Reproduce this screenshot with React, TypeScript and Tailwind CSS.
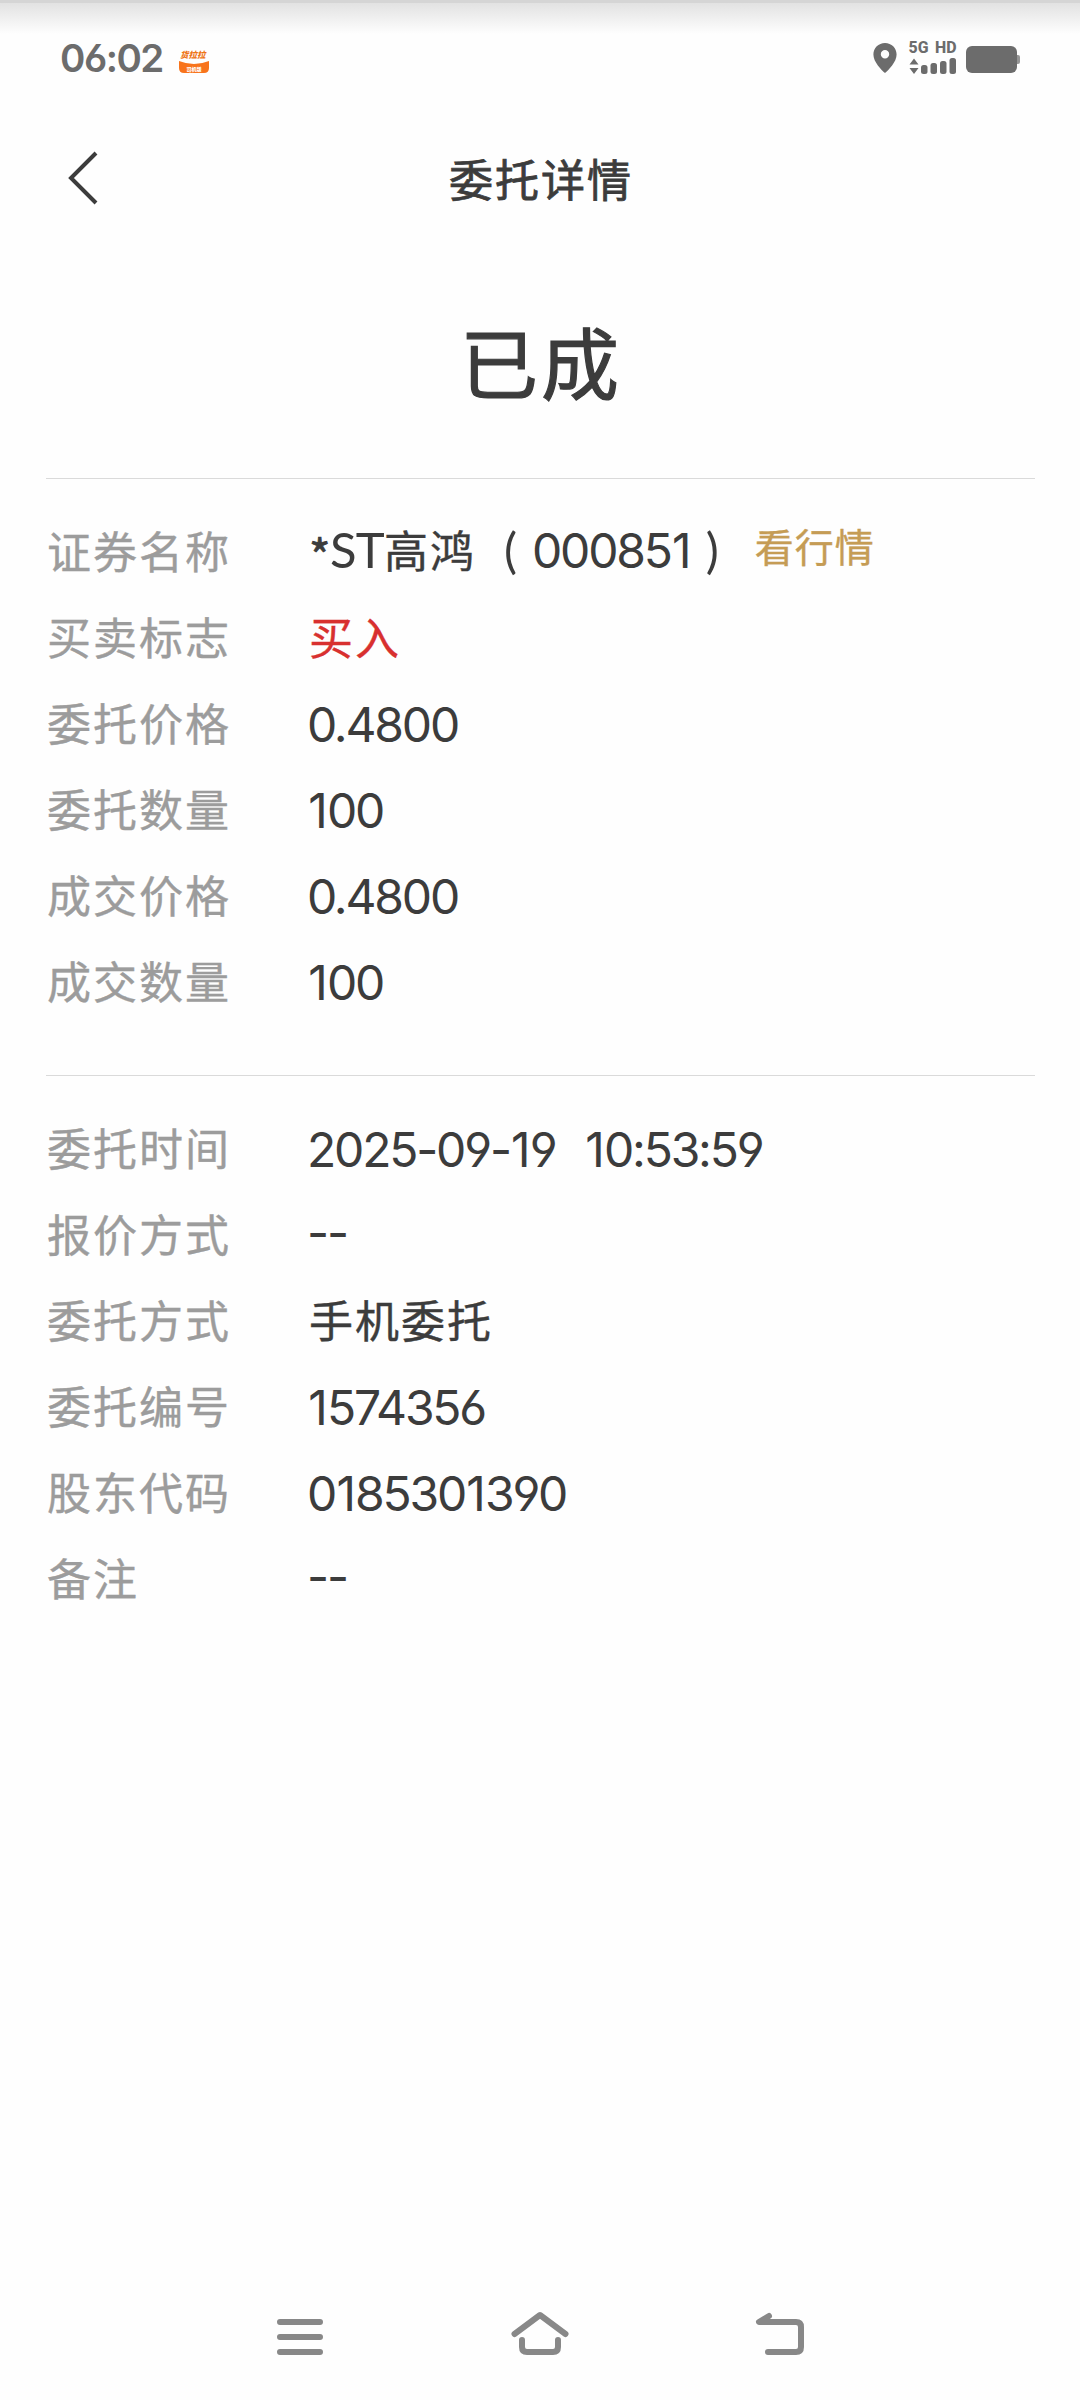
import { ReactNode } from "react";

type Row = {
    label: string;
    value: ReactNode;
    link?: string;
};

// the digit 1 is narrow, so it gets a little room on both sides
const Num = ({ children }: { children: string }) => (
    <span className="-ml-0.5 whitespace-pre font-['Inter',sans-serif] text-[48px] tracking-[-2.2px] [font-feature-settings:'cv03','cv04'] [word-spacing:3px]">
        {children.split(/(1)/).map((part, i) =>
            part === "1" ? <span key={i} className="px-[1.3px]">1</span> : part
        )}
    </span>
);

const Zh = ({ children }: { children: ReactNode }) => (
    <span className="text-[44px] tracking-[2px] [-webkit-text-stroke:0.4px]">{children}</span>
);

const orderRows: Row[] = [
    {
        label: "证券名称",
        value: (
            <>
                <span className="w-[21px] self-center pt-2 text-[46px] leading-none [-webkit-text-stroke:0.8px]">*</span>
                <span className="font-['Lato',sans-serif] text-[49px] tracking-[-0.8px]">ST</span>
                <Zh>高鸿</Zh>
                <span className="pl-7 pr-[17px] font-['Lato',sans-serif] text-[49px]">(</span>
                <Num>000851</Num>
                <span className="pl-[15px] font-['Lato',sans-serif] text-[49px]">)</span>
            </>
        ),
        link: "看行情",
    },
    { label: "买卖标志", value: <span className="flex text-[#d8302f]"><Zh>买入</Zh></span> },
    { label: "委托价格", value: "0.4800" },
    { label: "委托数量", value: "100" },
    { label: "成交价格", value: "0.4800" },
    { label: "成交数量", value: "100" },
];

const infoRows: Row[] = [
    { label: "委托时间", value: "2025-09-19  10:53:59" },
    { label: "报价方式", value: <Num>--</Num> },
    { label: "委托方式", value: <Zh>手机委托</Zh> },
    { label: "委托编号", value: "1574356" },
    { label: "股东代码", value: "0185301390" },
    { label: "备注", value: <Num>--</Num> },
];

const StatusBar = () => {
    return (
        <div className="flex h-[114px] items-start justify-between border-t-[3px] border-[#d5d5d5] bg-linear-to-b from-[#e2e2e2] to-[#fefefe] to-[31px] px-[60px] pt-[30px]">
            <div className="flex items-center gap-[13px]">
                <span className="w-[105px] font-['Inter',sans-serif] text-[38.5px] font-semibold leading-[50px] tracking-[-1.5px] text-[#6c6c6c] [font-feature-settings:'cv03','cv04']">
                    06:02
                </span>
                <svg width="32" height="34" viewBox="0 -8 32 34">
                    <text x="2" y="9" fontSize="8.5" fontWeight="900" fontStyle="italic" fill="#ee7414" fontFamily="Noto Sans CJK SC, sans-serif">货拉拉</text>
                    <path d="M1 12 Q16 18 31 12 V19 Q31 24 26 24 H6 Q1 24 1 19 Z" fill="#f8741c" />
                    <text x="8.5" y="22" fontSize="5" fontWeight="900" fill="#ffffff" fontFamily="Noto Sans CJK SC, sans-serif">司机版</text>
                </svg>
            </div>
            <svg width="148" height="42" viewBox="0 -6 148 42" fill="#6c6c6c">
                <path fillRule="evenodd" d="M13 4 C19.5 4 24.6 9 24.6 15.5 C24.6 23 16.5 31 13 34 C9.5 31 1.4 23 1.4 15.5 C1.4 9 6.5 4 13 4 Z M13 11 A4.2 4.2 0 1 0 13 19.4 A4.2 4.2 0 1 0 13 11 Z" />
                <text x="36.5" y="14" fontSize="17" fontWeight="800" textLength="20" lengthAdjust="spacingAndGlyphs" fontFamily="Roboto, sans-serif">5G</text>
                <text x="63" y="14" fontSize="17" fontWeight="800" textLength="21.5" lengthAdjust="spacingAndGlyphs" fontFamily="Roboto, sans-serif">HD</text>
                <path d="M42 19.5 L46.5 25.5 H37.5 Z M42 35 L46.5 29 H37.5 Z" />
                <rect x="49" y="26" width="6.5" height="9" rx="2.5" />
                <rect x="58.5" y="24" width="6.5" height="11" rx="2.5" />
                <rect x="68" y="22" width="6.5" height="13" rx="2.5" />
                <rect x="77.5" y="19" width="6.5" height="16" rx="2.5" />
                <rect x="94" y="7" width="51" height="27" rx="6" />
                <path d="M145 16 H146 Q148 16 148 18 V23 Q148 25 146 25 H145 Z" fill="#959595" />
            </svg>
        </div>
    );
};

const Header = () => {
    return (
        <div className="flex h-[128px] items-center justify-between px-[66px]">
            <svg width="34" height="56" viewBox="0 0 34 56" fill="none" stroke="#3c3c3c" strokeWidth="4">
                <path d="M30 3 L5 28 L30 53" />
            </svg>
            <h1 className="text-[44px] tracking-[2px] text-[#3c3c3c] [-webkit-text-stroke:0.8px]">委托详情</h1>
            <span className="w-8" />
        </div>
    );
};

const DetailRow = ({ row }: { row: Row }) => {
    return (
        <div className="flex h-[86px] items-center leading-[86px]">
            <span className="flex w-[263px] pl-px text-[#9c9c9c]"><Zh>{row.label}</Zh></span>
            <span className="flex items-baseline text-[#3c3c3c]">
                {typeof row.value === "string" ? <span className="flex pt-1.5"><Num>{row.value}</Num></span> : row.value}
            </span>
            {row.link && (
                <span className="pb-[9px] pl-9 text-[39px] leading-none tracking-[1px] text-[#c59c55] [-webkit-text-stroke:0.4px]">{row.link}</span>
            )}
        </div>
    );
};

const DetailList = ({ rows }: { rows: Row[] }) => {
    return (
        <div className="flex flex-col border-t border-[#dadada] pb-[52px] pt-7">
            {rows.map((row) => <DetailRow key={row.label} row={row} />)}
        </div>
    );
};

const NavBar = () => {
    return (
        <div className="flex h-[126px] items-center justify-center gap-[180px]">
            <svg width="60" height="60" viewBox="0 0 60 60" fill="none" stroke="#888888" strokeWidth="6" strokeLinecap="round">
                <path d="M10 15 H50 M10 30 H50 M10 45 H50" />
            </svg>
            <svg width="60" height="60" viewBox="0 0 60 60" fill="none" stroke="#888888" strokeWidth="6" strokeLinecap="round" strokeLinejoin="round">
                <path d="M4.5 27 L30 8 L55.5 27 M12 33 V40 Q12 45 17 45 H43 Q48 45 48 40 V33" />
            </svg>
            <svg width="60" height="60" viewBox="0 0 60 60" fill="none" stroke="#888888" strokeWidth="6" strokeLinecap="round" strokeLinejoin="round">
                <path d="M19 9 L9 15 H46 Q51 15 51 20 V40 Q51 45 46 45 H18" />
            </svg>
        </div>
    );
};

export default function App() {
    return (
        <div className="flex h-[2400px] w-[1080px] flex-col bg-[#fefefe] font-['Noto_Sans_CJK_SC',sans-serif]">
            <StatusBar />
            <Header />
            <div className="flex h-[236px] items-center justify-center pl-0.5 text-[78px] tracking-[3px] text-[#3c3c3c] [-webkit-text-stroke:1.2px]">已成</div>
            <div className="flex flex-1 flex-col pl-[46px] pr-[45px]">
                <DetailList rows={orderRows} />
                <DetailList rows={infoRows} />
            </div>
            <NavBar />
        </div>
    );
}
